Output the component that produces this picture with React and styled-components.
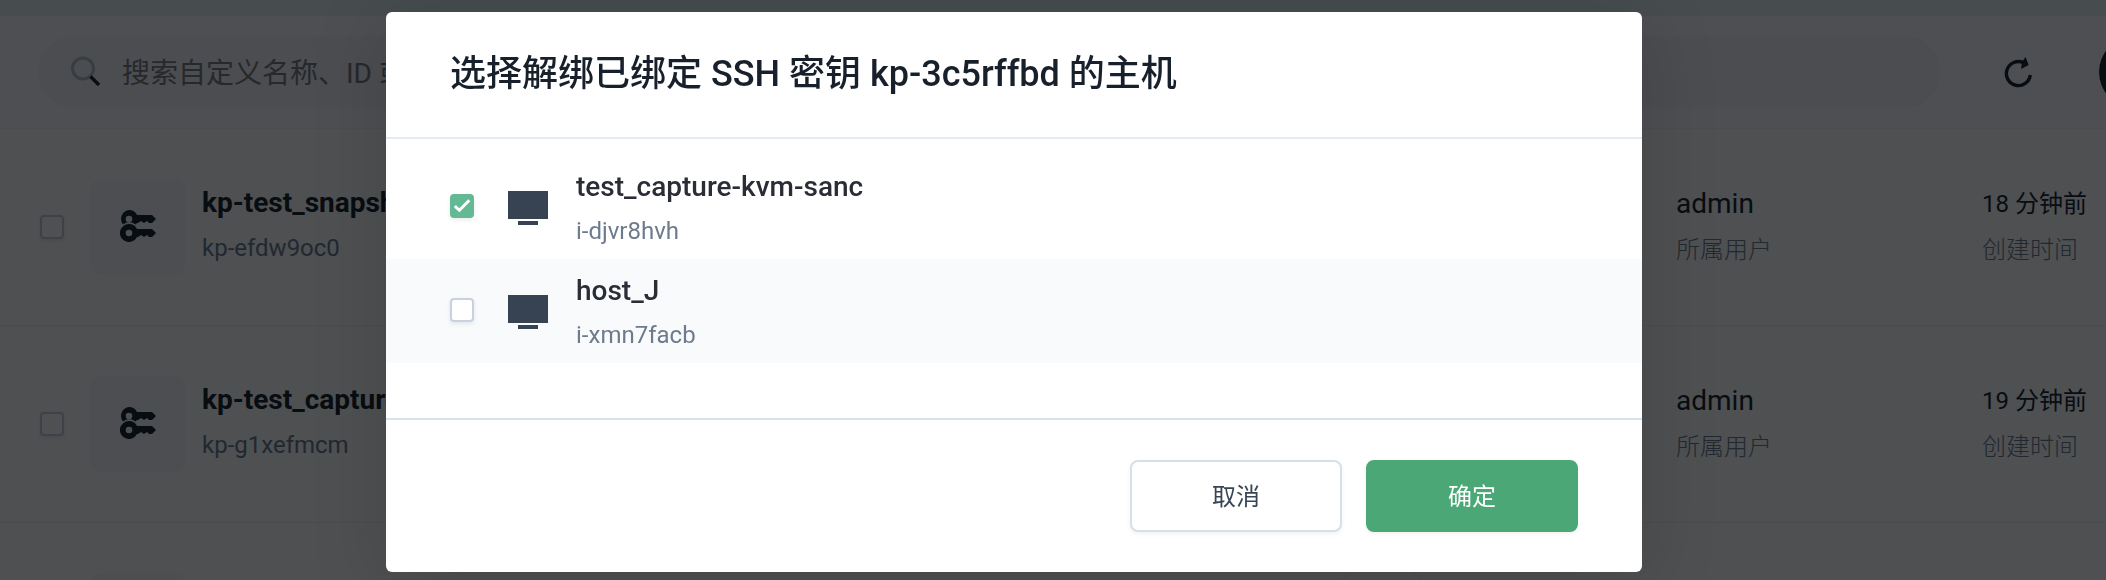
import React from "react";
import styled, { createGlobalStyle } from "styled-components";

const Global = createGlobalStyle`
  * { box-sizing: border-box; }
  body {
    margin: 0;
    overflow: hidden;
    font-family: Roboto, "Noto Sans CJK SC", sans-serif;
    color: #17202b;
  }
`;

const Page = styled.div`
  height: 580px;
  overflow: hidden;
  background: #fff;
  display: flex;
  flex-direction: column;
`;

const TopStrip = styled.div`
  flex: none;
  height: 16px;
  background: #e6f0f2;
`;

const Toolbar = styled.div`
  flex: none;
  height: 113px;
  padding: 20px 0 0 38px;
  display: flex;
  align-items: flex-start;
  background: #fbfbfd;
  border-bottom: 1px solid #f3f4f8;
`;

const SearchBox = styled.div`
  width: 1903px;
  height: 72px;
  flex: none;
  padding: 0 0 2px 32px;
  display: flex;
  align-items: center;
  gap: 22px;
  border-radius: 36px;
  background: #f5f5f8;
  color: #787b7e;
  font-size: 28px;
  white-space: nowrap;
`;

const RefreshButton = styled.div`
  flex: none;
  margin: 20px 0 0 63px;
  width: 30px;
  height: 32px;
  display: flex;
`;

const RoundButton = styled.div`
  flex: none;
  width: 72px;
  height: 72px;
  margin-left: 65px;
  border-radius: 50%;
  background: #17202b;
`;

const ListRow = styled.div`
  flex: none;
  height: 197px;
  padding: 0 0 0 40px;
  display: flex;
  align-items: center;
  border-bottom: 1px solid #eff1f5;
`;

const Checkbox = styled.div`
  flex: none;
  width: 24px;
  height: 24px;
  border-radius: 4px;
  border: 2px solid ${(p) => (p.$checked ? "#62b994" : "#c9d0de")};
  background: ${(p) => (p.$checked ? "#62b994" : "#fff")};
  box-shadow: 0 2px 4px rgba(50, 65, 90, 0.1);
  display: flex;
  align-items: center;
  justify-content: center;
  svg { flex: none; }
`;

const IconTile = styled.div`
  flex: none;
  width: 96px;
  height: 96px;
  margin-left: 26px;
  padding-bottom: 2px;
  border-radius: 12px;
  background: #f8f9fd;
  display: flex;
  align-items: center;
  justify-content: center;
`;

const KeyInfo = styled.div`
  flex: none;
  width: 1141px;
  padding: 0 0 8px 16px;
`;

const KeyName = styled.div`
  font-size: 28px;
  line-height: 40px;
  font-weight: 700;
`;

const KeyId = styled.div`
  margin-top: 9px;
  font-size: 24px;
  line-height: 32px;
  color: #6d7b8c;
`;

const StatusRing = styled.div`
  flex: none;
  width: 110px;
  height: 110px;
  margin: 0 239px 8px 0;
  border: 1px solid #e9ebef;
  border-radius: 50%;
`;

const MetaColumn = styled.div`
  width: ${(p) => p.$width}px;
  flex: none;
  padding-bottom: 5px;
  white-space: nowrap;
`;

const MetaValue = styled.div`
  font-size: ${(p) => p.$size}px;
  line-height: 40px;
`;

const MetaLabel = styled.div`
  margin-top: 10px;
  font-size: 24px;
  line-height: 32px;
  font-weight: 300;
  color: #6d7b8c;
`;

const Overlay = styled.div`
  position: fixed;
  inset: 0;
  padding: 12px 0 0 386px;
  background: rgba(3, 5, 8, 0.7);
`;

const Modal = styled.div`
  width: 1256px;
  height: 560px;
  display: flex;
  flex-direction: column;
  background: #fff;
  border-radius: 6px;
  box-shadow: 0 10px 80px rgba(0, 0, 0, 0.14);
`;

const ModalHeader = styled.div`
  height: 127px;
  padding: 40px 64px 0;
  border-bottom: 2px solid #e5ebf4;
  font-size: 36px;
  line-height: 44px;
  font-weight: 500;
`;

const HostList = styled.div`
  flex: 1;
  padding-top: 16px;
`;

const HostRow = styled.div`
  height: 104px;
  padding: 0 64px;
  display: flex;
  align-items: center;
  background: ${(p) => (p.$striped ? "#f8fafc" : "#fff")};
  ${Checkbox} { margin-bottom: 2px; }
`;

const HostIcon = styled.div`
  width: 40px;
  height: 34px;
  margin: 2px 28px 0 34px;
  display: flex;
`;

const HostName = styled.div`
  font-size: 28px;
  line-height: 40px;
  font-weight: 500;
  color: #2b2d36;
`;

const HostId = styled.div`
  margin-top: 8px;
  font-size: 24px;
  line-height: 32px;
  color: #6d7b8c;
`;

const ModalFooter = styled.div`
  height: 154px;
  padding: 40px 64px 0;
  display: flex;
  justify-content: flex-end;
  gap: 24px;
  border-top: 2px solid #d8e2ec;
`;

const Button = styled.button`
  width: 212px;
  height: 72px;
  padding: 0 0 4px;
  border-radius: 8px;
  border: 2px solid ${(p) => (p.$primary ? "#4ca777" : "#d7dfe9")};
  background: ${(p) => (p.$primary ? "#4ca777" : "#fff")};
  color: ${(p) => (p.$primary ? "#fff" : "#374556")};
  box-shadow: 0 2px 4px rgba(50, 65, 90, 0.07);
  font: 400 24px Roboto, "Noto Sans CJK SC", sans-serif;
`;

const SearchIcon = () => (
  <svg width="30" height="30" viewBox="0 0 30 30" fill="none">
    <circle cx="13" cy="12.5" r="10.5" stroke="#b5bfc6" strokeWidth="3" />
    <path d="M20.500 20.500L29 29" stroke="#17202b" strokeWidth="3.4" />
  </svg>
);

const RefreshIcon = () => (
  <svg width="30" height="32" viewBox="0 0 30 32" fill="none">
    <path d="M19.500 6.700A12 12 0 1 0 26.300 19" stroke="#17202b" strokeWidth="3.4" />
    <path d="M21.500 1L24.700 9L17 13L18 6Z" fill="#17202b" />
  </svg>
);

const KeysIcon = () => (
  <svg width="36" height="32" viewBox="0 0 36 32">
    <g fill="#17202b">
      <path
        fillRule="evenodd"
        d="M9 0A9 9 0 0 1 17 5H32L36 9L32 13H29L27 11L24 13L21 11L18 13H17L15.500 14.500A9 9 0 0 0 3 14.500A9 9 0 0 1 9 0ZM9 5.700A3.300 3.300 0 1 0 9 12.300A3.300 3.300 0 0 0 9 5.700Z"
      />
      <path
        fillRule="evenodd"
        d="M9 14A9 9 0 0 1 17 19H32L36 23L32 27H29L27 25L24 27L21 25L18 27H17A9 9 0 1 1 9 14ZM9 19.700A3.300 3.300 0 1 0 9 26.300A3.300 3.300 0 0 0 9 19.700Z"
      />
    </g>
  </svg>
);

const MonitorIcon = () => (
  <svg width="40" height="34" viewBox="0 0 40 34" fill="#374353">
    <rect width="40" height="28" />
    <rect x="10" y="30" width="20" height="4" />
  </svg>
);

const CheckIcon = () => (
  <svg width="20" height="20" viewBox="0 0 20 20" fill="none">
    <path d="M2.800 10.200L7.400 14.300L17.300 4.300" stroke="#fff" strokeWidth="3" />
  </svg>
);

const keyPairs = [
  { name: "kp-test_snapshot", id: "kp-efdw9oc0", created: "18 分钟前" },
  { name: "kp-test_capture", id: "kp-g1xefmcm", created: "19 分钟前" },
];

const hosts = [
  { name: "test_capture-kvm-sanc", id: "i-djvr8hvh", checked: true },
  { name: "host_J", id: "i-xmn7facb", checked: false },
];

export default function App() {
  return (
    <>
      <Global />
      <Page>
        <TopStrip />
        <Toolbar>
          <SearchBox>
            <SearchIcon />
            搜索自定义名称、ID 或
          </SearchBox>
          <RefreshButton><RefreshIcon /></RefreshButton>
          <RoundButton />
        </Toolbar>
        {keyPairs.map((k) => (
          <ListRow key={k.created}>
            <Checkbox />
            <IconTile><KeysIcon /></IconTile>
            <KeyInfo>
              <KeyName>{k.name}</KeyName>
              <KeyId>{k.id}</KeyId>
            </KeyInfo>
            <StatusRing />
            <MetaColumn $width={306}>
              <MetaValue $size={28}>admin</MetaValue>
              <MetaLabel>所属用户</MetaLabel>
            </MetaColumn>
            <MetaColumn $width={124}>
              <MetaValue $size={24}>{k.created}</MetaValue>
              <MetaLabel>创建时间</MetaLabel>
            </MetaColumn>
          </ListRow>
        ))}
        <ListRow>
          <Checkbox />
          <IconTile />
          <KeyInfo />
          <StatusRing />
        </ListRow>
      </Page>
      <Overlay>
        <Modal>
          <ModalHeader>选择解绑已绑定 SSH 密钥 kp-3c5rffbd 的主机</ModalHeader>
          <HostList>
            {hosts.map((h, i) => (
              <HostRow key={h.id} $striped={i % 2 === 1}>
                <Checkbox $checked={h.checked}>{h.checked && <CheckIcon />}</Checkbox>
                <HostIcon><MonitorIcon /></HostIcon>
                <div>
                  <HostName>{h.name}</HostName>
                  <HostId>{h.id}</HostId>
                </div>
              </HostRow>
            ))}
          </HostList>
          <ModalFooter>
            <Button>取消</Button>
            <Button $primary>确定</Button>
          </ModalFooter>
        </Modal>
      </Overlay>
    </>
  );
}
